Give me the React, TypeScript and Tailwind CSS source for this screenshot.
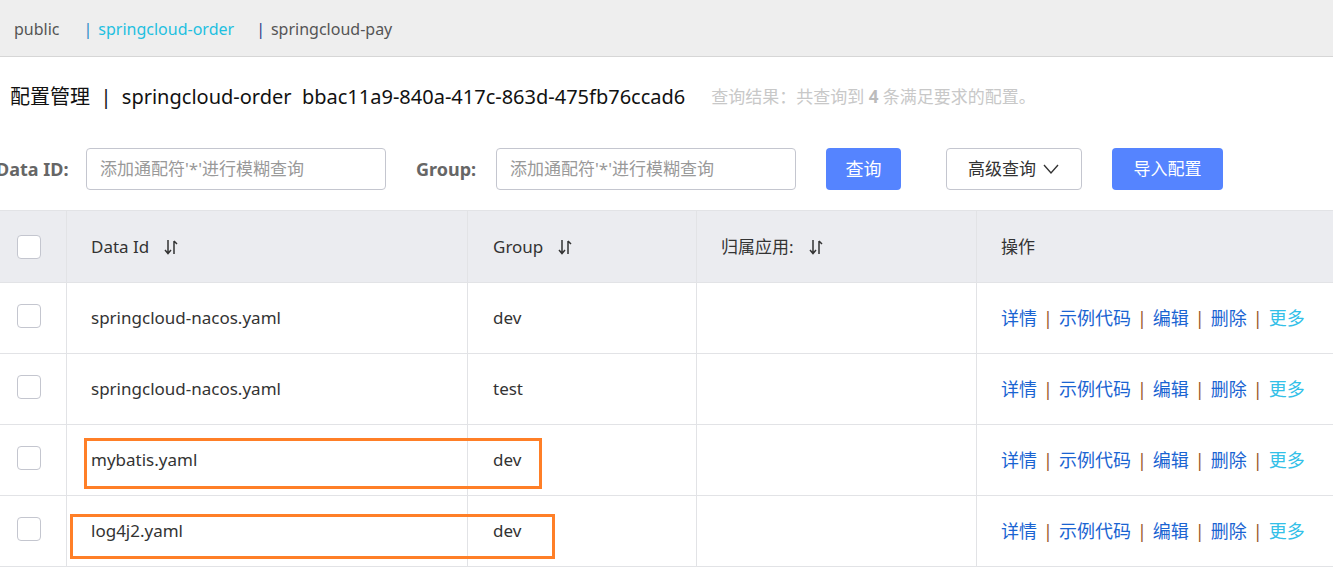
import React from 'react';

const font = { fontFamily: '"Noto Sans", "Noto Sans CJK SC", sans-serif' };

type Row = { id: string; group: string };

const rows: Row[] = [
  { id: 'springcloud-nacos.yaml', group: 'dev' },
  { id: 'springcloud-nacos.yaml', group: 'test' },
  { id: 'mybatis.yaml', group: 'dev' },
  { id: 'log4j2.yaml', group: 'dev' },
];

const SortIcon = () => (
  <svg width="16" height="18" viewBox="0 0 16 18" className="ml-[14px]">
    <path d="M5 2v13M2 12l3 3.5 3-3.5" fill="none" stroke="#333" strokeWidth="1.5" />
    <path d="M11 16V3M11 3l3 3" fill="none" stroke="#333" strokeWidth="1.5" />
  </svg>
);

const Checkbox = () => <div className="w-6 h-6 rounded-[4px] border border-[#c4c6cf] bg-white" />;

const Sep = () => <span className="mx-[6px] text-[#9a5b2e]">|</span>;

export default function App() {
  return (
    <div className="relative w-[1333px] h-[568px] overflow-hidden bg-white text-[#333]" style={font}>
      {/* namespace bar */}
      <div className="h-[57px] bg-[#eeeeee] border-b border-[#d6d6d6] flex items-center pl-[14px] pt-[2px] text-[16px] text-[#555]">
        <span>public</span>
        <span className="ml-[24px] text-[#2a8ac6]">|</span>
        <span className="ml-[6px] text-[#1ec0e0]">springcloud-order</span>
        <span className="ml-[22px] text-[#2a3a8a]">|</span>
        <span className="ml-[6px]">springcloud-pay</span>
      </div>

      {/* title */}
      <div className="h-[80px] flex items-center pl-[10px]">
        <span className="text-[20px] text-[#111]">配置管理 &nbsp;|&nbsp; springcloud-order &nbsp;bbac11a9-840a-417c-863d-475fb76ccad6</span>
        <span className="ml-[26px] text-[17px] text-[#c8c8c8]">
          查询结果：共查询到 <b className="text-[#bbb]">4</b> 条满足要求的配置。
        </span>
      </div>

      {/* search */}
      <div className="h-[42px] mt-[11px] flex items-center text-[17px]">
        <span className="ml-[-4px] w-[71px] text-[18px] font-bold text-[#666] whitespace-nowrap">Data ID:</span>
        <div className="ml-[19px] w-[300px] h-[42px] border border-[#c4c6cf] rounded-[4px] flex items-center pl-[13px] text-[#999]">
          添加通配符'*'进行模糊查询
        </div>
        <span className="ml-[30px] w-[62px] text-[18px] font-bold text-[#666]">Group:</span>
        <div className="ml-[18px] w-[300px] h-[42px] border border-[#c4c6cf] rounded-[4px] flex items-center pl-[13px] text-[#999]">
          添加通配符'*'进行模糊查询
        </div>
        <div className="ml-[30px] w-[75px] h-[42px] rounded-[4px] bg-[#5584ff] text-white flex items-center justify-center text-[18px]">
          查询
        </div>
        <div className="ml-[45px] w-[136px] h-[42px] rounded-[4px] border border-[#c4c6cf] flex items-center justify-center text-[17px] text-[#333]">
          高级查询
          <svg width="18" height="12" viewBox="0 0 18 12" className="ml-[6px]">
            <path d="M2 2l7 8 7-8" fill="none" stroke="#333" strokeWidth="1.4" />
          </svg>
        </div>
        <div className="ml-[30px] w-[111px] h-[42px] rounded-[4px] bg-[#5584ff] text-white flex items-center justify-center text-[17px]">
          导入配置
        </div>
      </div>

      {/* table */}
      <div className="mt-[20px] border-t border-[#e2e3e6] text-[17px]">
        <div className="flex h-[72px] bg-[#ebecf0] border-b border-[#e2e3e6]">
          <div className="w-[67px] border-r border-[#e2e3e6] flex items-center pl-[17px]">
            <Checkbox />
          </div>
          <div className="w-[401px] border-r border-[#e2e3e6] flex items-center pl-[24px]">
            Data Id <SortIcon />
          </div>
          <div className="w-[229px] border-r border-[#e2e3e6] flex items-center pl-[25px]">
            Group <SortIcon />
          </div>
          <div className="w-[280px] border-r border-[#e2e3e6] flex items-center pl-[24px]">
            归属应用: <SortIcon />
          </div>
          <div className="flex-1 flex items-center pl-[24px]">操作</div>
        </div>
        {rows.map((r, i) => (
          <div key={i} className="flex h-[71px] border-b border-[#e2e3e6]">
            <div className="w-[67px] border-r border-[#e2e3e6] flex items-center pl-[17px] pb-[4px]">
              <Checkbox />
            </div>
            <div className="w-[401px] border-r border-[#e2e3e6] flex items-center pl-[24px]">{r.id}</div>
            <div className="w-[229px] border-r border-[#e2e3e6] flex items-center pl-[25px]">{r.group}</div>
            <div className="w-[280px] border-r border-[#e2e3e6]" />
            <div className="flex-1 flex items-center pl-[24px] text-[18px] text-[#1a64d2] whitespace-nowrap">
              <span>详情</span>
              <Sep />
              <span>示例代码</span>
              <Sep />
              <span>编辑</span>
              <Sep />
              <span>删除</span>
              <Sep />
              <span className="text-[#33c0e8]">更多</span>
            </div>
          </div>
        ))}
      </div>

      {/* annotation boxes */}
      <div className="absolute left-[84px] top-[438px] w-[458px] h-[51px] border-[3px] border-[#ff7f27]" />
      <div className="absolute left-[70px] top-[514px] w-[485px] h-[45px] border-[3px] border-[#ff7f27]" />
    </div>
  );
}
